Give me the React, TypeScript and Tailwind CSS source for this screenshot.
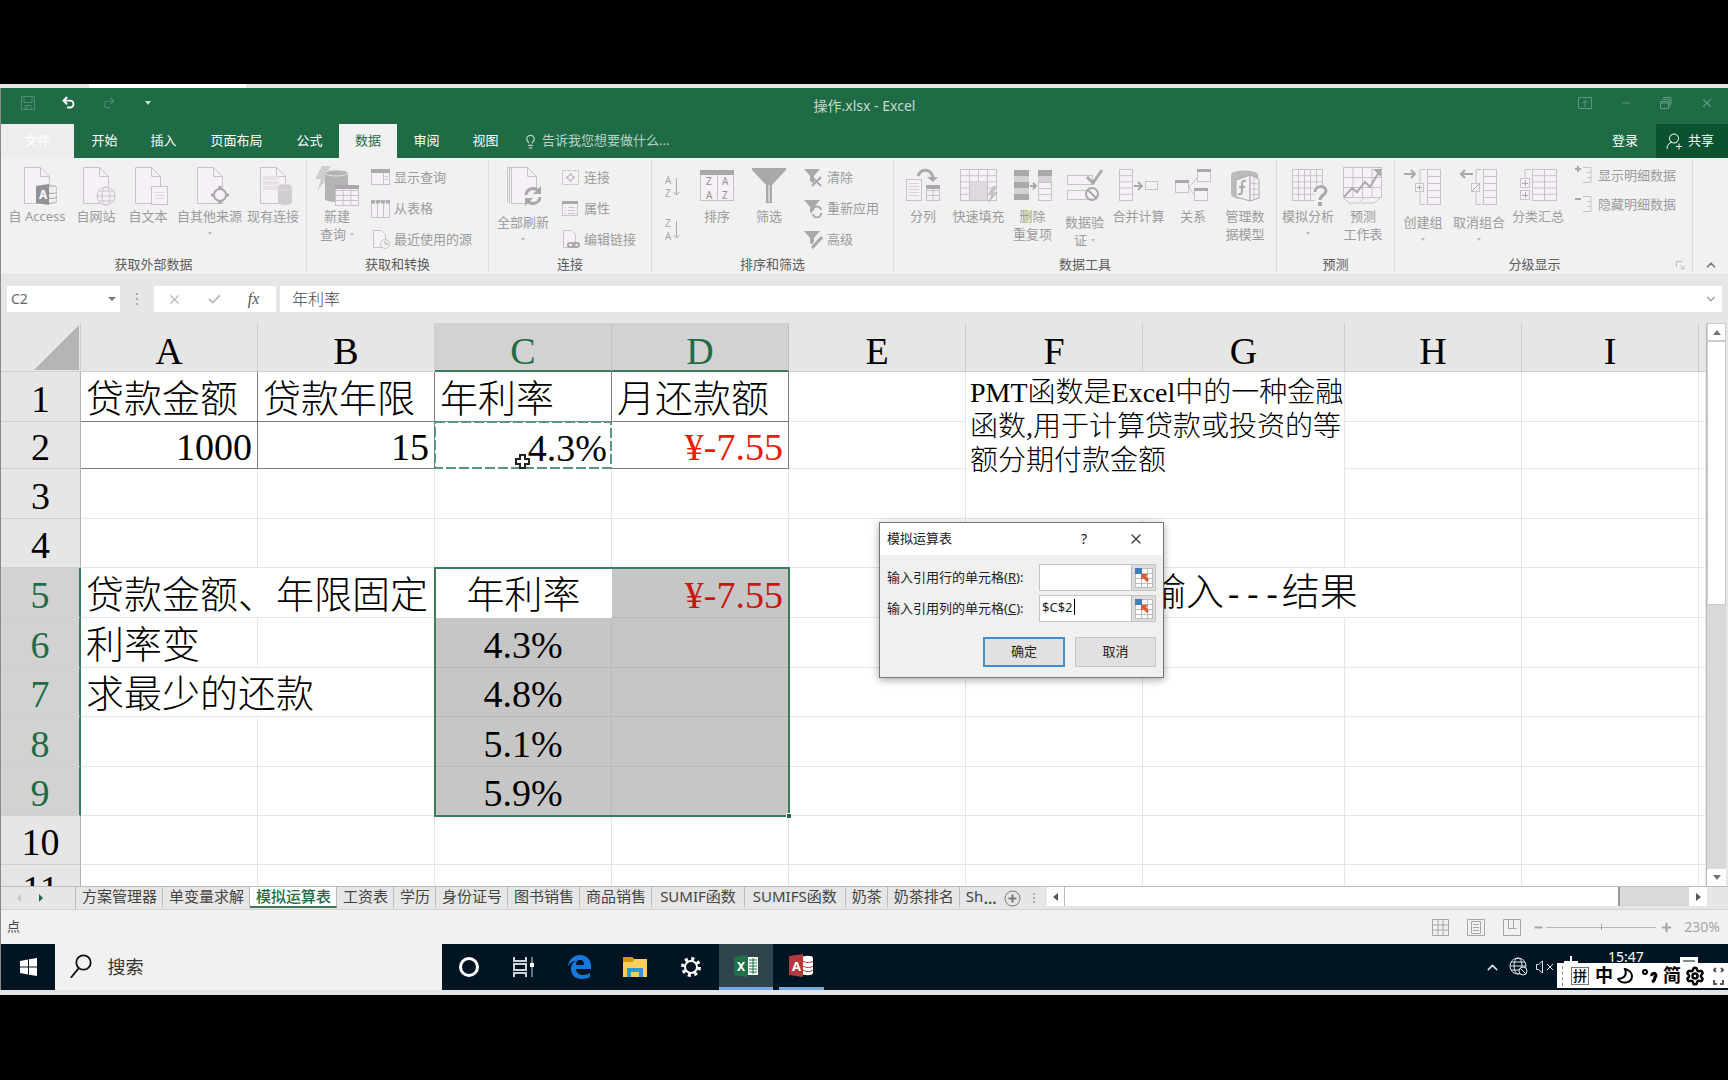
import type { ReactNode } from 'react';
import { ChevronDown, ChevronUp, Check, X, Undo2, Redo2, Lightbulb, Settings, Plus, Minus } from 'lucide-react';

const EDGE = '#c8c3c9';
const PAPER = '#f6f1f6';
const DARK = '#aaa8ab';

function Doc({ x = 7 }: { x?: number }) {
  return (
    <g fill={PAPER} stroke={EDGE}>
      <path d={`M${x + 0.5} 1.5h16l9 9v27h-25z`} />
      <path d={`M${x + 16.5} 1.5v9h9`} fill="none" />
    </g>
  );
}

function Icon({ w = 40, children }: { w?: number; children: ReactNode }) {
  return (
    <svg width={w} height="40" viewBox={`0 0 ${w} 40`} fill="none" className="shrink-0">
      {children}
    </svg>
  );
}

function Small({ children }: { children: ReactNode }) {
  return (
    <svg width="19" height="19" viewBox="0 0 19 19" fill="none" className="shrink-0">
      {children}
    </svg>
  );
}

type BigProps = {
  icon: ReactNode;
  lines: string[];
  width: string;
  low?: boolean;
  arrow?: boolean;
};

function Caret() {
  return <span className="inline-block border-x-[2px] border-t-[3px] border-x-transparent border-t-[#bbb]" />;
}

function Big({ icon, lines, width, low, arrow }: BigProps) {
  return (
    <button className={`flex shrink-0 flex-col items-center pt-2 ${width}`}>
      {icon}
      <span className={`flex flex-col items-center text-[13px] leading-[18px] whitespace-nowrap ${low ? 'mt-[7px]' : 'mt-px'}`}>
        {lines.map((line, i) => (
          <span key={line} className="flex items-center gap-1">
            {line}
            {arrow && lines.length > 1 && i === lines.length - 1 && <Caret />}
          </span>
        ))}
        {arrow && lines.length === 1 && (
          <span className="flex h-4 items-center">
            <Caret />
          </span>
        )}
      </span>
    </button>
  );
}

function Line({ icon, label, tight }: { icon: ReactNode; label: string; tight?: boolean }) {
  return (
    <button className={`flex items-center gap-1 text-[13px] whitespace-nowrap ${tight ? 'h-[29px]' : 'h-[31px]'}`}>
      {icon}
      {label}
    </button>
  );
}

function Group({ label, width, children }: { label: string; width: string; children: ReactNode }) {
  return (
    <section className={`flex shrink-0 flex-col ${width}`}>
      <div className="flex flex-1">{children}</div>
      <h2 className="h-[18px] text-center text-[13px] leading-[17px] text-[#5c5c5c]">{label}</h2>
    </section>
  );
}

function Divider() {
  return <div className="my-0.5 w-px shrink-0 bg-[#dcdcdc]" />;
}

function Cylinder({ x, y, w, h, fill }: { x: number; y: number; w: number; h: number; fill: string }) {
  return (
    <g>
      <path d={`M${x} ${y}v${h}c0 4 ${w} 4 ${w} 0v${-h}z`} fill={fill} />
      <ellipse cx={x + w / 2} cy={y} rx={w / 2} ry="3" fill={fill} stroke="#e4e2e4" />
    </g>
  );
}

function Table({ x, y, w, h, cols, rows }: { x: number; y: number; w: number; h: number; cols: number; rows: number }) {
  let d = '';
  for (let i = 1; i < cols; i++) d += `M${x + (w * i) / cols} ${y}v${h}`;
  for (let i = 1; i < rows; i++) d += `M${x} ${y + (h * i) / rows}h${w}`;
  return (
    <g stroke={EDGE}>
      <rect x={x} y={y} width={w} height={h} fill={PAPER} />
      <path d={d} />
    </g>
  );
}

function Funnel({ children }: { children: ReactNode }) {
  return (
    <Small>
      <path d="M0 1h16l-6 7v8l-4-3v-5z" fill={DARK} />
      {children}
    </Small>
  );
}

function Ribbon() {
  return (
    <div className="flex h-[116px] shrink-0 overflow-hidden bg-[#f1f1f1] text-[#9c9c9c]">
      <Group label="获取外部数据" width="w-[305px]">
        <Big
          width="w-[72px]"
          lines={['自 Access']}
          icon={
            <Icon>
              <Doc />
              <path d="M28 22c0-3 12-3 12 0v13c0 3-12 3-12 0zM28 26c2 2 10 2 12 0M28 31c2 2 10 2 12 0" fill="#eee" stroke={DARK} />
              <path d="M19 20l13-2v21l-13-2z" fill="#929092" />
              <text x="22" y="33" fontSize="12" fontWeight="700" fill="#fff">A</text>
            </Icon>
          }
        />
        <Big
          width="w-[46px]"
          lines={['自网站']}
          icon={
            <Icon>
              <Doc />
              <g stroke={EDGE} fill={PAPER}>
                <circle cx="30" cy="30" r="9" />
                <ellipse cx="30" cy="30" rx="4" ry="9" />
                <path d="M21 30h18M23 25h14M23 35h14" />
              </g>
            </Icon>
          }
        />
        <Big
          width="w-[58px]"
          lines={['自文本']}
          icon={
            <Icon>
              <Doc />
              <rect x="23.5" y="20.500" width="16" height="18" fill={PAPER} stroke={EDGE} />
              <path d="M27 26.500h9M27 29.500h9M27 32.500h9" stroke="#dcd8dc" />
            </Icon>
          }
        />
        <Big
          width="w-[65px]"
          arrow
          lines={['自其他来源']}
          icon={
            <Icon>
              <Doc />
              <circle cx="30" cy="29" r="6" fill={PAPER} stroke={DARK} strokeWidth="2" />
              <path d="M30 20v4M30 34v4M21 29h4M35 29h4" stroke={DARK} strokeWidth="3" />
            </Icon>
          }
        />
        <Big
          width="w-[62px]"
          lines={['现有连接']}
          icon={
            <Icon>
              <Doc />
              <path d="M10 12h16M10 17h16M10 22h16" stroke="#e6e2e6" strokeWidth="4" />
              <Cylinder x={25} y={21} w={14} h={15} fill="#cfcdd0" />
            </Icon>
          }
        />
      </Group>
      <Divider />
      <Group label="获取和转换" width="w-[181px]">
        <Big
          width="w-[60px]"
          arrow
          lines={['新建', '查询']}
          icon={
            <Icon w={46}>
              <path d="M8 0h9l-5 8h5l-14 17 4-12h-6z" fill="#cfcdd0" />
              <Cylinder x={11} y={7} w={23} h={26} fill="#b5b3b6" />
              <Table x={21.5} y={19.5} w={23} h={20} cols={3} rows={4} />
              <path d="M21 19h24v4h-24z" fill={DARK} />
            </Icon>
          }
        />
        <div className="flex flex-col items-start pt-1 pl-1">
          <Line
            label="显示查询"
            icon={
              <Small>
                <rect x=".5" y="1.500" width="18" height="15" fill={PAPER} stroke={EDGE} />
                <path d="M0 1h19v4h-19z" fill={DARK} />
                <path d="M12.500 5v11M14 8.500h3M14 11.500h3" stroke={EDGE} />
              </Small>
            }
          />
          <Line
            label="从表格"
            icon={
              <Small>
                <Table x={0.5} y={1.5} w={18} h={17} cols={3} rows={1} />
                <path d="M0 3h19" stroke={DARK} strokeWidth="3" strokeDasharray="4 1" />
              </Small>
            }
          />
          <Line
            label="最近使用的源"
            icon={
              <Small>
                <path d="M2.500 .5h8l4 4v13h-12z" fill={PAPER} stroke={EDGE} />
                <circle cx="14" cy="14" r="4.500" fill={PAPER} stroke={EDGE} />
                <path d="M14 11v3h3" stroke={DARK} />
              </Small>
            }
          />
        </div>
      </Group>
      <Divider />
      <Group label="连接" width="w-[162px]">
        <Big
          width="w-[68px]"
          arrow
          low
          lines={['全部刷新']}
          icon={
            <Icon>
              <path d="M4.500 36.500v-35h14" stroke={EDGE} />
              <path d="M6.500 37.500v-35h14" stroke={EDGE} />
              <Doc x={8} />
              <circle cx="30" cy="30" r="9" fill="#f1f1f1" />
              <path d="M23 29a7 7 0 0 1 13-3M37 31a7 7 0 0 1-13 3" stroke={DARK} strokeWidth="3" />
              <path d="M38 20v8h-8zM22 40v-8h8z" fill={DARK} />
            </Icon>
          }
        />
        <div className="flex flex-col items-start pt-1 pl-1">
          <Line
            label="连接"
            icon={
              <Small>
                <rect x="1.500" y="2.500" width="16" height="14" fill={PAPER} stroke={EDGE} strokeDasharray="4 1" />
                <path d="M9.500 5l1.500 3 3 1.500-3 1.500-1.500 3-1.500-3-3-1.500 3-1.500z" stroke={DARK} />
              </Small>
            }
          />
          <Line
            label="属性"
            icon={
              <Small>
                <rect x="1.500" y="2.500" width="15" height="14" fill={PAPER} stroke={EDGE} />
                <path d="M1 2h16v3h-16z" fill={DARK} />
                <path d="M4 8.500h1M4 11.500h1M4 14.500h1M7 8.500h7M7 11.500h7M7 14.500h7" stroke={EDGE} />
              </Small>
            }
          />
          <Line
            label="编辑链接"
            icon={
              <Small>
                <path d="M2.500 .5h8l4 4v13h-12z" fill={PAPER} stroke={EDGE} />
                <rect x="7" y="13" width="6" height="4" rx="2" stroke={DARK} strokeWidth="2" />
                <rect x="12" y="13" width="6" height="4" rx="2" stroke={DARK} strokeWidth="2" />
              </Small>
            }
          />
        </div>
      </Group>
      <Divider />
      <Group label="排序和筛选" width="w-[241px]">
        <div className="flex w-9 flex-col items-center gap-[17px] pt-4 pl-1">
          {['AZ', 'ZA'].map((order) => (
            <button key={order} aria-label={order}>
              <svg width="16" height="26" viewBox="0 0 16 26" fill={DARK}>
                <text x="1" y="10" fontSize="10">{order[0]}</text>
                <text x="1" y="23" fontSize="10">{order[1]}</text>
                <path d="M12.500 4v17M9.500 18l3 3 3-3" stroke={DARK} fill="none" />
              </svg>
            </button>
          ))}
        </div>
        <Big
          width="w-[58px]"
          lines={['排序']}
          icon={
            <Icon>
              <rect x="3.500" y="4.500" width="33" height="30" fill={PAPER} stroke={EDGE} />
              <path d="M3 4h34v5h-34z" fill={DARK} />
              <path d="M20.500 9v26" stroke={EDGE} />
              <g fontSize="10" fill="#939193">
                <text x="9" y="19">Z</text>
                <text x="9" y="33">A</text>
                <text x="25" y="19">A</text>
                <text x="25" y="33">Z</text>
              </g>
            </Icon>
          }
        />
        <Big
          width="w-[46px]"
          lines={['筛选']}
          icon={
            <Icon>
              <path d="M3 2h34v2l-14 15v18h-6v-18l-14-15z" fill={DARK} />
              <path d="M20 19v17" stroke="#d2d0d3" strokeWidth="2" />
            </Icon>
          }
        />
        <div className="flex flex-col items-start pt-1 pl-3">
          <Line label="清除" icon={<Funnel><path d="M8 9l9 9M17 9l-9 9" stroke={DARK} strokeWidth="2" /></Funnel>} />
          <Line
            label="重新应用"
            icon={
              <Funnel>
                <circle cx="13" cy="13" r="5" fill="#f1f1f1" />
                <path d="M9 12a4 4 0 0 1 8-1M17 14a4 4 0 0 1-8 1" stroke={DARK} strokeWidth="2" />
              </Funnel>
            }
          />
          <Line label="高级" icon={<Funnel><path d="M8 18l10-11" stroke="#f1f1f1" strokeWidth="5" /><path d="M8 18l10-11" stroke={DARK} strokeWidth="3" /></Funnel>} />
        </div>
      </Group>
      <Divider />
      <Group label="数据工具" width="w-[382px]">
        <Big
          width="w-[58px]"
          lines={['分列']}
          icon={
            <Icon>
              <rect x="3.500" y="13.500" width="15" height="21" fill={PAPER} stroke={EDGE} />
              <path d="M6 17.500h10M6 20.500h10M6 23.500h10M6 26.500h10M6 29.500h10" stroke="#d8d4d8" />
              <path d="M15 10c3-8 13-8 15 2" stroke={DARK} strokeWidth="3" />
              <path d="M24 11h11l-5 5z" fill={DARK} />
              <Table x={23.5} y={19.5} w={13} h={15} cols={2} rows={3} />
              <path d="M23 19h14v4h-14z" fill={DARK} />
            </Icon>
          }
        />
        <Big
          width="w-[53px]"
          lines={['快速填充']}
          icon={
            <Icon>
              <Table x={1.5} y={3.5} w={36} h={31} cols={4} rows={5} />
              <path d="M11 16h17v18h-17z" fill="#ddd9dd" />
              <path d="M34 20l-6 9h4l-3 9 10-12h-4l3-6z" fill="#c4c2c5" />
            </Icon>
          }
        />
        <Big
          width="w-[55px]"
          lines={['删除', '重复项']}
          icon={
            <Icon>
              <path d="M1 4h15v6h-15zM1 16h15v6h-15zM1 28h15v6h-15zM25 4h14v6h-14z" fill={DARK} />
              <path d="M1 10h15v6h-15zM1 22h15v6h-15zM25 10h14v6h-14z" fill="#d5d2d6" />
              <Table x={25.5} y={16.5} w={13} h={18} cols={1} rows={3} />
              <path d="M17 20h6M20 17l3 3-3 3" stroke={DARK} strokeWidth="2" />
            </Icon>
          }
        />
        <Big
          width="w-[49px]"
          arrow
          low
          lines={['数据验', '证']}
          icon={
            <Icon>
              <rect x="2.500" y="9.500" width="25" height="9" fill={PAPER} stroke={EDGE} />
              <rect x="2.500" y="24.500" width="25" height="9" fill={PAPER} stroke={EDGE} />
              <path d="M22 11l6 6 9-13" stroke={DARK} strokeWidth="3" />
              <circle cx="27" cy="28" r="6" fill={PAPER} stroke={DARK} strokeWidth="2" />
              <path d="M23 24l8 8" stroke={DARK} strokeWidth="2" />
            </Icon>
          }
        />
        <Big
          width="w-[59px]"
          lines={['合并计算']}
          icon={
            <Icon>
              <Table x={0.5} y={3.5} w={13} h={31} cols={1} rows={5} />
              <path d="M15 20h8M19 16l4 4-4 4" stroke={DARK} strokeWidth="2" />
              <rect x="26.500" y="15.500" width="12" height="8" fill={PAPER} stroke={EDGE} />
            </Icon>
          }
        />
        <Big
          width="w-[50px]"
          lines={['关系']}
          icon={
            <Icon>
              <path d="M16 21l8-9M16 21l5 8" stroke={EDGE} />
              <g fill={PAPER} stroke={EDGE}>
                <rect x="2.500" y="14.500" width="13" height="12" />
                <rect x="24.500" y="3.500" width="13" height="12" />
                <rect x="21.500" y="22.500" width="13" height="12" />
              </g>
              <path d="M2 14h14v3h-14zM24 3h14v3h-14zM21 22h14v3h-14z" fill={DARK} />
            </Icon>
          }
        />
        <Big
          width="w-[54px]"
          lines={['管理数', '据模型']}
          icon={
            <Icon>
              <path d="M6 9c0-6 27-6 27 0v5l-14 19c-8 0-13-2-13-5z" fill="#bcbabd" />
              <path d="M11 14l14-5v26l-14-4z" fill="#f1f1f1" stroke={DARK} />
              <path d="M25 9l9 4v19l-9 3z" fill={PAPER} stroke={DARK} />
              <path d="M29 11v23M25 17l9 1M25 23h9M25 29l9-1" stroke={EDGE} />
              <path d="M21 15c-4-1-4 1-4 4v5c0 4-1 5-4 4M14 21h6" stroke={DARK} strokeWidth="2" />
            </Icon>
          }
        />
      </Group>
      <Divider />
      <Group label="预测" width="w-[117px]">
        <Big
          width="w-[62px]"
          arrow
          lines={['模拟分析']}
          icon={
            <Icon>
              <Table x={4.5} y={3.5} w={30} h={31} cols={5} rows={5} />
              <path d="M25 20h14v20h-12z" fill="#f1f1f1" />
              <path d="M27 26c0-7 11-7 11-1 0 4-6 4-6 9" stroke={DARK} strokeWidth="3" />
              <path d="M30 36h4v4h-4z" fill={DARK} />
            </Icon>
          }
        />
        <Big
          width="w-[48px]"
          lines={['预测', '工作表']}
          icon={
            <Icon>
              <Table x={0.5} y={1.5} w={38} h={30} cols={4} rows={3} />
              <path d="M1 32l5 5h10l5-5M18 37h13l6-5" stroke={EDGE} />
              <path d="M1 31l8-9 5 4 8-10 5 5 9-15" stroke={DARK} strokeWidth="2" />
              <path d="M30 3h8v8z" fill={DARK} />
            </Icon>
          }
        />
      </Group>
      <Divider />
      <Group label="分级显示" width="w-[279px]">
        <Big
          width="w-[56px]"
          arrow
          low
          lines={['创建组']}
          icon={
            <Icon>
              <path d="M1 8h11M8 4l4 4-4 4" stroke={DARK} strokeWidth="2" />
              <path d="M22 3.500h-5v35h5" stroke={EDGE} />
              <rect x="12.500" y="17.500" width="8" height="8" fill={PAPER} stroke={EDGE} />
              <path d="M14 21.500h5M16.500 19v5" stroke={DARK} />
              <Table x={24.5} y={3.5} w={13} h={35} cols={1} rows={5} />
            </Icon>
          }
        />
        <Big
          width="w-[56px]"
          arrow
          low
          lines={['取消组合']}
          icon={
            <Icon>
              <path d="M2 8h12M6 4l-4 4 4 4" stroke={DARK} strokeWidth="2" />
              <path d="M22 3.500h-5v35h5" stroke={EDGE} />
              <rect x="12.500" y="17.500" width="8" height="8" fill={PAPER} stroke={EDGE} />
              <path d="M13 25l8-8" stroke={DARK} />
              <Table x={24.5} y={3.5} w={13} h={35} cols={1} rows={5} />
            </Icon>
          }
        />
        <Big
          width="w-[62px]"
          lines={['分类汇总']}
          icon={
            <Icon>
              <Table x={14.5} y={3.5} w={24} h={31} cols={2} rows={5} />
              <path d="M13 3.500h-6v9" stroke={EDGE} />
              <rect x="2.500" y="12.500" width="9" height="9" fill={PAPER} stroke={EDGE} />
              <rect x="2.500" y="24.500" width="9" height="9" fill={PAPER} stroke={EDGE} />
              <path d="M4 17.500h6M7.500 14v6M4 29.500h6M7.500 26v6" stroke={DARK} />
            </Icon>
          }
        />
        <div className="flex flex-col items-start pt-[3px] pl-1.5">
          <Line
            tight
            label="显示明细数据"
            icon={<Small><path d="M3 0v6M0 3h6" stroke={DARK} strokeWidth="2" /><path d="M8 1.500h8v15h-8M12 6.500h4M12 11.500h4" stroke={EDGE} /></Small>}
          />
          <Line
            tight
            label="隐藏明细数据"
            icon={<Small><path d="M0 4h6" stroke={DARK} strokeWidth="2" /><path d="M8 1.500h8v15h-8M12 6.500h4M12 11.500h4" stroke={EDGE} /></Small>}
          />
        </div>
      </Group>
      <button aria-label="分级显示设置" className="flex w-[18px] shrink-0 items-end pb-1 pl-0.5">
        <svg width="9" height="9" viewBox="0 0 9 9" stroke="#bdbdbd" fill="none">
          <path d="M.5 6v-5.500h6M4 4l4 4M8 4.500v3.500h-3.500" />
        </svg>
      </button>
      <Divider />
      <button aria-label="折叠功能区" className="flex flex-1 items-end justify-center pb-0.5">
        <ChevronUp size={14} strokeWidth={3} className="text-[#777]" />
      </button>
    </div>
  );
}

const menuTabs = [
  { label: '开始', width: 'w-[59px]' },
  { label: '插入', width: 'w-[59px]' },
  { label: '页面布局', width: 'w-[87px]' },
  { label: '公式', width: 'w-[59px]' },
  { label: '数据', width: 'w-[58px]', active: true },
  { label: '审阅', width: 'w-[59px]' },
  { label: '视图', width: 'w-[59px]' },
];

function TitleBar() {
  return (
    <header className="shrink-0 bg-[#1e6b45] text-white">
      <div className="relative flex h-9 items-start justify-between">
        <div className="flex items-center pt-[7px] pl-5 text-[#4f8f6f]">
          <button aria-label="保存" className="w-10">
            <svg width="14" height="14" viewBox="0 0 14 14" fill="none" stroke="currentColor">
              <path d="M.5 .5h13v13h-13zM3 .5v6h8v-6M4 13.500v-4h6v4M6 10v3" />
            </svg>
          </button>
          <button aria-label="撤消" className="w-[41px] text-white"><Undo2 size={15} strokeWidth={3} /></button>
          <button aria-label="恢复" className="w-[43px]"><Redo2 size={14} /></button>
          <button aria-label="自定义快速访问工具栏" className="flex">
            <i className="border-x-[3px] border-t-[4px] border-x-transparent border-t-[#cfe0d7]" />
          </button>
        </div>
        <h1 className="absolute inset-x-0 top-2 text-center text-sm leading-5 text-[#c6dace]">操作.xlsx - Excel</h1>
        <div className="relative flex items-center gap-7 pt-2 pr-3.5 text-[#5f997c]">
          <button aria-label="功能区显示选项">
            <svg width="14" height="12" viewBox="0 0 14 12" fill="none" stroke="currentColor">
              <path d="M.5 .5h13v11h-13zM7 10v-6M4.500 6l2.500-2.500 2.500 2.500" />
            </svg>
          </button>
          <button aria-label="最小化"><Minus size={12} /></button>
          <button aria-label="还原">
            <svg width="12" height="12" viewBox="0 0 12 12" fill="none" stroke="currentColor">
              <path d="M.5 4.500h8v7h-8zM2 2.500h8v7M.5 6h8M3 .5h8v7" />
            </svg>
          </button>
          <button aria-label="关闭"><X size={14} /></button>
        </div>
      </div>
      <nav className="flex h-[34px] text-[13px]">
        <button className="mr-px w-[73px] shrink-0 bg-[#eeeded] text-white">文件</button>
        {menuTabs.map((tab) => (
          <button
            key={tab.label}
            className={`shrink-0 ${tab.width} ${tab.active ? 'bg-[#f1f1f1] text-[#1e6b45]' : ''}`}
          >
            {tab.label}
          </button>
        ))}
        <button className="flex items-center gap-1 pl-2 text-[#b9d2c5]">
          <Lightbulb size={15} />
          告诉我您想要做什么...
        </button>
        <button className="mr-[18px] ml-auto">登录</button>
        <button className="flex w-[72px] items-center justify-center gap-1.5 bg-[#0b5230] pr-1">
          <svg width="16" height="17" viewBox="0 0 16 17" fill="none" stroke="currentColor">
            <circle cx="8" cy="5.500" r="4.500" />
            <path d="M1 16c0-4 2-6 5-7M10 9l1 1M10 13.500h6M13 10.500v6" />
          </svg>
          共享
        </button>
      </nav>
    </header>
  );
}

function FormulaBar() {
  return (
    <div className="flex h-[49px] shrink-0 items-start bg-[#e6e6e6] pt-3 pr-1.5 pl-[6px]">
      <div className="flex h-[26px] w-[113px] shrink-0 items-center bg-white pr-1">
        <input aria-label="名称框" defaultValue="C2" className="w-full min-w-0 pl-1 text-sm text-[#666] outline-none" />
        <span className="border-x-[4px] border-t-[4px] border-x-transparent border-t-[#777]" />
      </div>
      <span className="flex h-[26px] w-[34px] shrink-0 flex-col items-center justify-center gap-[3px]">
        <i className="size-0.5 bg-[#aaa]" />
        <i className="size-0.5 bg-[#aaa]" />
        <i className="size-0.5 bg-[#aaa]" />
      </span>
      <div className="flex h-[26px] w-[122px] shrink-0 items-center justify-around bg-white pr-1 text-[#bbb]">
        <button aria-label="取消输入"><X size={15} /></button>
        <button aria-label="确认输入"><Check size={15} strokeWidth={3} /></button>
        <button className="font-['Liberation_Serif',serif] text-base text-[#555] italic">fx</button>
      </div>
      <div className="ml-1 flex h-[26px] flex-1 items-center bg-white pr-1">
        <input
          aria-label="编辑栏"
          defaultValue="年利率"
          className="w-full pl-3 text-base font-light text-[#444] outline-none"
        />
        <ChevronDown size={14} className="text-[#999]" />
      </div>
    </div>
  );
}

const columns = ['A', 'B', 'C', 'D', 'E', 'F', 'G', 'H', 'I'];

function RowHead({ n, active }: { n: number; active?: boolean }) {
  return (
    <th
      scope="row"
      className={`border-b border-b-[#cfcfcf] px-0 pt-1 pb-0 text-center font-normal ${
        active ? 'border-r-2 border-r-[#3a7d5c] bg-[#d2d2d2] text-[#1e6b45]' : 'border-r border-r-[#b4b4b4] bg-[#e6e6e6]'
      }`}
    >
      {n}
    </th>
  );
}

const cell = 'border-r border-b border-[#e6e6e6] pt-1 pb-0';
const boxed = 'border-r border-b border-[#7d7d7d] pt-1 pb-0';
const picked = 'border-r border-b border-[#b9b9b9] bg-[#c6c6c6] pt-1 pb-0';

function Blank({ count }: { count: number }) {
  return (
    <>
      {Array.from({ length: count }, (_, i) => (
        <td key={i} className={cell} />
      ))}
    </>
  );
}

const rates = [
  { row: 6, rate: '4.3%', note: '利率变', height: 'h-[50px]' },
  { row: 7, rate: '4.8%', note: '求最少的还款', wide: true, height: 'h-[49px]' },
  { row: 8, rate: '5.1%', note: '', height: 'h-[50px]' },
  { row: 9, rate: '5.9%', note: '', height: 'h-[49px]' },
];

function Sheet() {
  return (
    <div className="min-w-0 flex-1 overflow-hidden border-r border-[#bdbdbd] bg-white">
      <table className="w-full table-fixed border-separate border-spacing-0 font-['Liberation_Serif','Noto_Sans_CJK_SC',serif] text-[38px] leading-[40px] font-light whitespace-nowrap">
        <colgroup>
          <col className="w-20" />
          <col className="w-[177px]" />
          <col className="w-[177px]" />
          <col className="w-[177px]" />
          <col className="w-[177px]" />
          <col className="w-[177px]" />
          <col className="w-[177px]" />
          <col className="w-[202px]" />
          <col className="w-[177px]" />
          <col className="w-[177px]" />
          <col />
        </colgroup>
        <thead>
          <tr className="h-[49px] bg-[#e6e6e6]">
            <td className="border-r border-b border-[#cfcfcf] p-0">
              <button aria-label="全选" className="flex w-full justify-end pr-px">
                <svg width="45" height="45" viewBox="0 0 45 45"><path d="M45 0v45h-45z" fill="#b5b5b5" /></svg>
              </button>
            </td>
            {columns.map((name) => (
              <th
                key={name}
                scope="col"
                className={`border-r px-0 pt-2 pb-0 leading-[38px] font-normal ${
                  name === 'C' || name === 'D'
                    ? 'border-b-2 border-r-[#c0c0c0] border-b-[#3a7d5c] bg-[#d2d2d2] text-[#1e6b45]'
                    : 'border-b border-r-[#cdcdcd] border-b-[#cfcfcf]'
                }`}
              >
                {name}
              </th>
            ))}
            <td className="border-b border-[#cfcfcf]" />
          </tr>
        </thead>
        <tbody>
          <tr className="h-[50px]">
            <RowHead n={1} />
            <td className={`${boxed} px-[5px]`}>贷款金额</td>
            <td className={`${boxed} px-[5px]`}>贷款年限</td>
            <td className={`${boxed} px-[5px]`}>年利率</td>
            <td className={`${boxed} px-[5px]`}>月还款额</td>
            <Blank count={1} />
            <td colSpan={2} rowSpan={3} className={`${cell} px-1 align-top text-[28px] leading-[34px]`}>
              PMT函数是Excel中的一种金融
              <br />
              函数,用于计算贷款或投资的等
              <br />
              额分期付款金额
            </td>
            <Blank count={3} />
          </tr>
          <tr className="h-[47px]">
            <RowHead n={2} />
            <td className={`${boxed} px-[5px] text-right`}>1000</td>
            <td className={`${boxed} px-[5px] text-right`}>15</td>
            <td className="relative px-[5px] pt-1 pb-0 text-right">
              4.3%
              <svg width="179" height="49" viewBox="0 0 179 49" className="absolute -top-px -left-px" fill="none">
                <rect x="1" y="1" width="176" height="46" stroke="#5b987b" strokeWidth="2" strokeDasharray="10 3" />
                <path d="M86 34h5v4h4v5h-4v4h-5v-4h-4v-5h4z" fill="#fff" stroke="#222" strokeWidth="2" />
              </svg>
            </td>
            <td className={`${boxed} px-[5px] text-right text-[#f01a0c]`}>¥-7.55</td>
            <Blank count={1} />
            <Blank count={3} />
          </tr>
          <tr className="h-[50px]">
            <RowHead n={3} />
            <Blank count={5} />
            <Blank count={3} />
          </tr>
          <tr className="h-[49px]">
            <RowHead n={4} />
            <Blank count={10} />
          </tr>
          <tr className="h-[50px]">
            <RowHead n={5} active />
            <td colSpan={2} className={`${cell} px-[5px]`}>贷款金额、年限固定</td>
            <td className="relative px-[5px] pt-1 pb-0 text-center">
              年利率
              <span className="pointer-events-none absolute -top-px -left-px h-[250px] w-[356px] border-2 border-[#3a7d5c]">
                <i className="absolute -right-[3px] -bottom-[3px] size-[5px] border-t border-l border-white bg-[#1e6b45]" />
              </span>
            </td>
            <td className={`${picked} px-[5px] text-right text-[#c8170f]`}>¥-7.55</td>
            <Blank count={2} />
            <td colSpan={2} className={`${cell} px-[5px]`}>
              输入<span className="font-['Liberation_Mono',monospace] text-[32px]">---</span>结果
            </td>
            <Blank count={2} />
          </tr>
          {rates.map((r) => (
            <tr key={r.row} className={r.height}>
              <RowHead n={r.row} active />
              <td colSpan={r.wide ? 2 : 1} className={`${cell} px-[5px]`}>{r.note}</td>
              {!r.wide && <Blank count={1} />}
              <td className={`${picked} px-[5px] text-center`}>{r.rate}</td>
              <td className={picked} />
              <Blank count={6} />
            </tr>
          ))}
          <tr className="h-[49px]">
            <RowHead n={10} />
            <Blank count={10} />
          </tr>
          <tr className="h-[45px]">
            <RowHead n={11} />
            <Blank count={10} />
          </tr>
        </tbody>
      </table>
    </div>
  );
}

function PickButton({ label }: { label: string }) {
  return (
    <button type="button" aria-label={label} className="flex w-6 shrink-0 items-center justify-center border-l border-[#bbb] bg-[#dcdcdc]">
      <svg width="18" height="20" viewBox="0 0 18 20" fill="none">
        <path d="M.5 .5h17v19h-17z" fill="#fff" stroke="#bbb" />
        <path d="M6.500 0v20M12.500 0v20M0 5.500h18M0 10.500h18M0 15.500h18" stroke="#bbb" />
        <path d="M0 0h7v6h-7z" fill="#3f7ec0" />
        <path d="M6 6h7l-2 2 3 4-2 2-4-4-2 2z" fill="#dd5a31" />
      </svg>
    </button>
  );
}

function Dialog() {
  return (
    <form
      role="dialog"
      aria-label="模拟运算表"
      className="absolute top-[199px] left-[878px] w-[285px] border border-[#777] bg-[#f0f0f0] text-[13px] text-[#222] shadow-[0_2px_8px_rgba(0,0,0,0.35)]"
    >
      <div className="flex h-8 items-center bg-white pl-[7px]">
        <h2 className="flex-1">模拟运算表</h2>
        <button type="button" aria-label="帮助" className="w-[50px] text-center text-sm">?</button>
        <button type="button" aria-label="关闭" className="flex w-[54px] justify-center"><X size={16} strokeWidth={2} className="text-[#444]" /></button>
      </div>
      <div className="flex flex-col gap-1 px-[7px] pt-[9px]">
        <div className="flex h-[27px] items-center">
          <label htmlFor="row-input" className="flex-1">输入引用行的单元格(<u>R</u>):</label>
          <div className="flex h-[27px] w-[117px] border border-[#c4c4c4] bg-white">
            <input id="row-input" className="w-full min-w-0 px-0.5 outline-none" />
            <PickButton label="选择行单元格" />
          </div>
        </div>
        <div className="flex h-[27px] items-center">
          <label htmlFor="col-input" className="flex-1">输入引用列的单元格(<u>C</u>):</label>
          <div className="flex h-[27px] w-[117px] border border-[#c4c4c4] bg-white">
            <span className="flex w-full min-w-0 items-center pb-1">
              <input id="col-input" defaultValue="$C$2" className="w-[34px] pl-0.5 leading-5 outline-none" />
              <i className="h-4 w-px bg-black" />
            </span>
            <PickButton label="选择列单元格" />
          </div>
        </div>
      </div>
      <div className="flex justify-end gap-2.5 px-[7px] pt-[15px] pb-2.5">
        <button type="button" className="h-[30px] w-[82px] border-2 border-[#3f8fd2] bg-[#e1e1e1]">确定</button>
        <button type="button" className="h-[30px] w-[81px] border border-[#c6c6c6] bg-[#e1e1e1]">取消</button>
      </div>
    </form>
  );
}

function VerticalScroll() {
  return (
    <div className="flex w-[21px] shrink-0 flex-col bg-[#e6e6e6] pr-0.5">
      <button aria-label="向上滚动" className="flex h-[18px] shrink-0 items-center justify-center border border-[#ccc] bg-white">
        <i className="border-x-[4px] border-b-[5px] border-x-transparent border-b-[#777]" />
      </button>
      <div className="flex-1 bg-[#d9d9d9]">
        <div className="h-[50%] border border-[#ccc] bg-white" />
      </div>
      <button aria-label="向下滚动" className="flex h-[17px] shrink-0 items-center justify-center bg-white">
        <i className="border-x-[4px] border-t-[5px] border-x-transparent border-t-[#777]" />
      </button>
    </div>
  );
}

const sheetTabs = [
  '方案管理器', '单变量求解', '模拟运算表', '工资表', '学历', '身份证号',
  '图书销售', '商品销售', 'SUMIF函数', 'SUMIFS函数', '奶茶', '奶茶排名',
];

function SheetTabs() {
  return (
    <div className="flex h-[23px] shrink-0 border-t border-[#bdbdbd] bg-[#e6e6e6] text-[15px] text-[#444]">
      <div className="flex w-[75px] shrink-0 items-center gap-[18px] border-r border-[#bbb] pl-4">
        <button aria-label="上一个工作表"><i className="block border-y-[4px] border-r-[4px] border-y-transparent border-r-[#c4c4c4]" /></button>
        <button aria-label="下一个工作表"><i className="block border-y-[4px] border-l-[4px] border-y-transparent border-l-[#1e6b45]" /></button>
      </div>
      {sheetTabs.map((name) => (
        <button
          key={name}
          className={`h-[21px] shrink-0 border-r border-b-2 border-r-[#bbb] leading-[19px] whitespace-nowrap ${
            name.startsWith('SUMIF') ? 'px-2' : 'pr-[5px] pl-1.5'
          } ${name === '模拟运算表' ? 'border-b-[#3a7d5c] bg-white font-medium text-[#1e6b45]' : 'border-b-transparent'}`}
        >
          {name}
        </button>
      ))}
      <button className="ml-1.5 h-[19px] w-[18px] shrink-0 overflow-hidden text-left leading-[19px]">Sh</button>
      <button aria-label="更多工作表" className="w-5 shrink-0 text-left leading-[17px] font-bold text-[#1e6b45]">...</button>
      <button aria-label="新工作表" className="flex shrink-0 items-center">
        <svg width="17" height="17" viewBox="0 0 17 17" fill="none" stroke="#777">
          <circle cx="8.500" cy="8.500" r="7.500" />
          <path d="M8.500 4.500v8M4.500 8.500h8" strokeWidth="2" />
        </svg>
      </button>
      <span className="flex w-[26px] shrink-0 flex-col items-center justify-center gap-0.5">
        <i className="size-0.5 bg-[#aaa]" />
        <i className="size-0.5 bg-[#aaa]" />
        <i className="size-0.5 bg-[#aaa]" />
      </span>
      <button aria-label="向左滚动" className="flex h-[19px] w-[18px] shrink-0 items-center justify-center border-r border-[#bbb] bg-white">
        <i className="border-y-[4px] border-r-[5px] border-y-transparent border-r-[#555]" />
      </button>
      <div className="h-[19px] flex-1 bg-[#d9d9d9]">
        <div className="h-full w-[89%] border-r-2 border-[#999] bg-white" />
      </div>
      <button aria-label="向右滚动" className="mr-[21px] flex h-[19px] w-[18px] shrink-0 items-center justify-center bg-white">
        <i className="border-y-[4px] border-l-[5px] border-y-transparent border-l-[#555]" />
      </button>
    </div>
  );
}

function StatusBar() {
  return (
    <div className="flex h-[35px] shrink-0 items-center border-t border-[#d4d4d4] bg-[#f1f1f1] pr-2 pl-1.5 text-[#a6a6a6]">
      <span className="flex-1 text-[13px] text-[#444]">点</span>
      <div className="flex items-center gap-[18px]">
        <button aria-label="普通">
          <svg width="17" height="17" viewBox="0 0 17 17" fill="none" stroke="currentColor">
            <path d="M.5 .5h16v16h-16zM6 0v17M11 0v17M0 6h17M0 11h17" />
          </svg>
        </button>
        <button aria-label="页面布局">
          <svg width="18" height="17" viewBox="0 0 18 17" fill="none" stroke="currentColor">
            <path d="M.5 .5h17v16h-17zM4.500 2.500h9v12h-9zM6 5.500h6M6 8.500h6M6 11.500h6" />
          </svg>
        </button>
        <button aria-label="分页预览">
          <svg width="18" height="17" viewBox="0 0 18 17" fill="none" stroke="currentColor">
            <path d="M.5 .5h17v16h-17zM5.500 0v9.500h8M10.500 0v9" />
          </svg>
        </button>
      </div>
      <button aria-label="缩小" className="ml-3"><Minus size={11} strokeWidth={4} /></button>
      <input
        type="range"
        aria-label="显示比例"
        defaultValue={50}
        className="mx-0.5 h-px w-[110px] appearance-none bg-[#b5b5b5] [&::-webkit-slider-thumb]:h-1.5 [&::-webkit-slider-thumb]:w-px [&::-webkit-slider-thumb]:appearance-none [&::-webkit-slider-thumb]:bg-[#a0a0a0]"
      />
      <button aria-label="放大" className="ml-0.5"><Plus size={13} strokeWidth={4} /></button>
      <span className="ml-[11px] text-sm">230%</span>
    </div>
  );
}

function Taskbar() {
  return (
    <footer className="relative flex h-[46px] shrink-0 bg-[#001421]">
      <button aria-label="开始" className="flex w-[54px] shrink-0 items-center justify-center">
        <svg width="17" height="18" viewBox="0 0 17 18" fill="#fff">
          <path d="M0 3l8-1.500v7h-8zM9 1.200l8-1.200v8.500h-8zM0 9.500h8v7l-8-1.500zM9 9.500h8v8.500l-8-1.200z" />
        </svg>
      </button>
      <label className="flex w-[387px] shrink-0 items-center gap-4 bg-[#f1f1f1] pl-[15px]">
        <svg width="24" height="28" viewBox="0 0 24 28" fill="none" stroke="#111" strokeWidth="2">
          <circle cx="15" cy="9" r="8" />
          <path d="M10 15l-9 11" />
        </svg>
        <input placeholder="搜索" className="w-full text-[18px] outline-none placeholder:text-[#333]" />
      </label>
      <button aria-label="Cortana" className="flex w-[54px] shrink-0 items-center justify-center">
        <span className="size-5 rounded-full border-[3px] border-white" />
      </button>
      <button aria-label="任务视图" className="flex w-[55px] shrink-0 items-center justify-center">
        <svg width="21" height="20" viewBox="0 0 21 20" fill="none" stroke="#cfd6da" strokeWidth="2">
          <path d="M1 0v4h12v-4M1 7h12v6h-12zM1 20v-4h12v4" />
          <path d="M19 0v20" strokeWidth="1" />
          <path d="M17 6h4v4h-4z" fill="#fff" stroke="none" />
        </svg>
      </button>
      <button aria-label="Edge" className="flex w-14 shrink-0 items-center justify-center">
        <svg width="23" height="24" viewBox="0 0 23 24" fill="#1479da">
          <path d="M0 11c1-7 6-11 12-11 7 0 11 5 11 11v3h-15c0 4 4 6 7 6 3 0 5-1 7-2v4c-2 1-5 2-8 2-7 0-11-4-11-10 0-4 2-7 5-8-4 0-6 2-8 5zM8 10h8c0-3-1-5-4-5s-4 2-4 5z" />
        </svg>
      </button>
      <button aria-label="文件资源管理器" className="flex w-14 shrink-0 items-center justify-center">
        <svg width="24" height="21" viewBox="0 0 24 21">
          <path d="M0 0h9l2 2h13v18h-24z" fill="#f9cf5a" />
          <path d="M0 0h9l2 2-1 3h-10z" fill="#d9970f" />
          <path d="M4 20v-9h16v9h-4v-5h-8v5z" fill="#3d93d8" />
        </svg>
      </button>
      <button aria-label="设置" className="flex w-14 shrink-0 items-center justify-center">
        <svg width="20" height="20" viewBox="0 0 20 20" fill="none" stroke="#fff">
          <circle cx="10" cy="10" r="6" strokeWidth="2" />
          <circle cx="10" cy="10" r="8" strokeWidth="4" strokeDasharray="3 3.280" />
        </svg>
      </button>
      <button aria-label="Excel" className="flex w-[54px] shrink-0 items-center justify-center border-b-[3px] border-[#76a9dc] bg-[#30444e]">
        <svg width="25" height="22" viewBox="0 0 25 22">
          <path d="M13 2h11v18h-11z" fill="#fff" />
          <path d="M15 5h8M15 8h8M15 11h8M15 14h8M15 17h8M19 3v16" stroke="#1f7246" />
          <path d="M0 2l14-2v22l-14-2z" fill="#1f7246" />
          <text x="3" y="16" fontSize="12" fontWeight="700" fill="#fff">X</text>
        </svg>
      </button>
      <button aria-label="Access" className="ml-1.5 flex w-[45px] shrink-0 items-center justify-center border-b-[3px] border-[#76a9dc]">
        <svg width="25" height="23" viewBox="0 0 25 23">
          <path d="M12 4c2-3 12-3 12 0v15c0 3-10 3-12 0z" fill="#fff" />
          <path d="M14 7c3 2 8 2 10 0M14 12c3 2 8 2 10 0M14 16c3 2 8 2 10 0" stroke="#a4373a" fill="none" />
          <path d="M0 2l14-2v23l-14-2z" fill="#b03a3c" />
          <text x="3" y="17" fontSize="13" fontWeight="700" fill="#fff">A</text>
        </svg>
      </button>
      <div className="ml-auto flex w-[244px] shrink-0 items-center text-[#dfe6ea]">
        <button aria-label="显示隐藏的图标" className="w-[25px] shrink-0"><ChevronUp size={17} /></button>
        <svg width="20" height="20" viewBox="0 0 20 20" fill="none" stroke="currentColor" className="shrink-0">
          <circle cx="9" cy="9" r="8" />
          <ellipse cx="9" cy="9" rx="4" ry="8" />
          <path d="M1 9h16M2 5h14M2 13h14" />
          <circle cx="14" cy="14" r="4" fill="#001421" />
          <path d="M11 11l6 6" />
        </svg>
        <svg width="18" height="14" viewBox="0 0 18 14" fill="none" stroke="currentColor" className="ml-[7px] shrink-0">
          <path d="M.5 4.500h2l4-3.500v12l-4-3.500h-2zM11 4l6 6M17 4l-6 6" />
        </svg>
        <svg width="14" height="10" viewBox="0 0 14 10" fill="none" stroke="#fff" strokeWidth="2" className="mt-3 ml-2.5 shrink-0 self-start">
          <path d="M7 0v10M0 6h14" />
        </svg>
        <time className="ml-[30px] self-start pt-[3px] text-sm leading-5 text-white">15:47</time>
        <svg width="18" height="12" viewBox="0 0 18 12" className="mt-3 ml-9 shrink-0 self-start">
          <path d="M0 1h18v11h-18z" fill="#fff" />
          <path d="M3 5h12" stroke="#001421" />
        </svg>
      </div>
      <div className="absolute top-[19px] right-0 flex h-[25px] w-[171px] items-center gap-1 bg-white pl-[5px] text-[18px] font-bold text-black">
        <i className="mr-1 h-5 border-l border-dashed border-[#888]" />
        <span className="flex size-[18px] shrink-0 items-center justify-center border border-[#777] text-sm font-medium">拼</span>
        <span className="ml-0.5">中</span>
        <svg width="16" height="16" viewBox="0 0 16 16" fill="none" stroke="#000" strokeWidth="2" className="shrink-0">
          <path d="M8 1c2 6 0 9-7 10 4 6 14 4 14-3 0-3-3-6-7-7z" />
        </svg>
        <svg width="18" height="16" viewBox="0 0 18 16" fill="none" stroke="#000" strokeWidth="2" className="ml-1 shrink-0">
          <circle cx="4" cy="4" r="2" />
          <path d="M11 8a2 2 0 1 1 3 1c0 3-1 4-3 5" strokeWidth="3" />
        </svg>
        <span>简</span>
        <Settings size={20} strokeWidth={3} className="shrink-0" />
        <svg width="11" height="18" viewBox="0 0 11 18" fill="none" stroke="#555" strokeWidth="2" className="ml-1 shrink-0">
          <path d="M3 1l-2 2 2 2M8 1l2 2-2 2M1 13v4h3M10 13v4h-3" />
        </svg>
      </div>
    </footer>
  );
}

export default function App() {
  return (
    <div className="flex h-screen flex-col overflow-hidden bg-black pt-[84px] pb-[85px] font-['Noto_Sans','Noto_Sans_CJK_SC',sans-serif]">
      <div className="flex h-1 shrink-0 bg-[#e4e4e4]">
        <div className="ml-[89px] w-[157px] bg-white" />
      </div>
      <div className="flex min-h-0 flex-1 flex-col border-l border-[#8a8a8a]">
        <TitleBar />
        <Ribbon />
        <FormulaBar />
        <main className="relative flex min-h-0 flex-1 bg-[#e6e6e6]">
          <Sheet />
          <VerticalScroll />
          <Dialog />
        </main>
        <SheetTabs />
        <StatusBar />
        <Taskbar />
      </div>
      <div className="h-[5px] shrink-0 bg-[#e4e4e4]" />
    </div>
  );
}
